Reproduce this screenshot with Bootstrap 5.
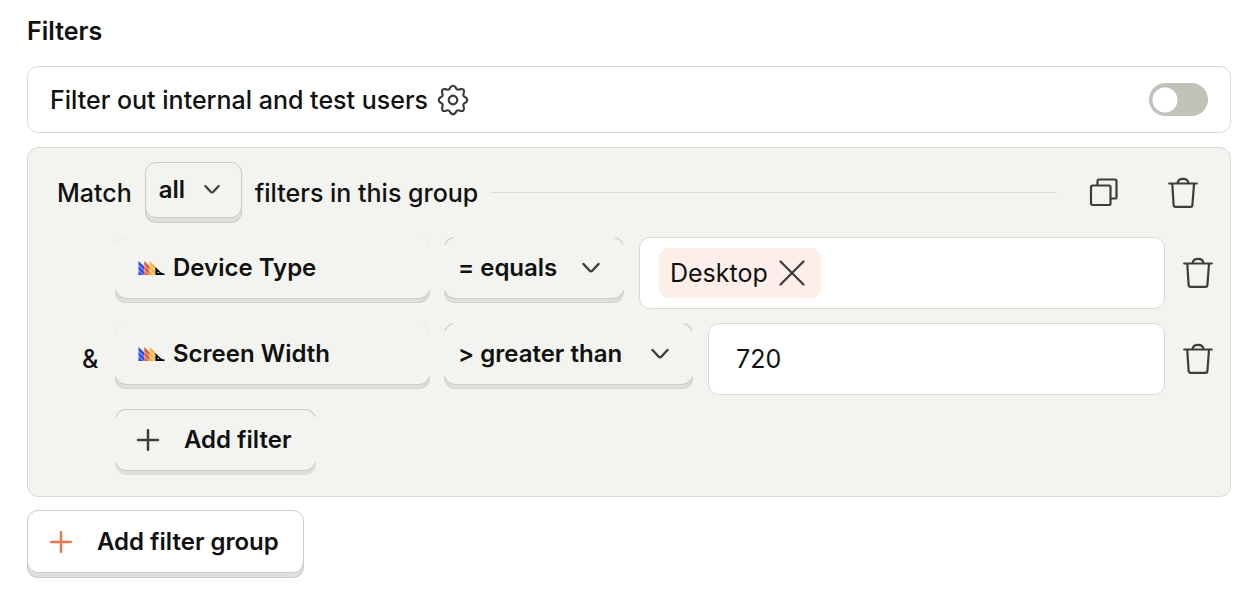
<!DOCTYPE html>
<html lang="en">
<head>
<meta charset="utf-8">
<meta name="viewport" content="width=device-width, initial-scale=1">
<title>Filters</title>
<link href="https://cdn.jsdelivr.net/npm/bootstrap@5.3.0/dist/css/bootstrap.min.css" rel="stylesheet">
<style>
  :root { --ink: #111; --icon: #3c3c3a; --panel: #f3f4ef; --line: #dadbd2; --edge: #cccccb; --lip: #dfdfdc; }
  body { font-family: Inter, "Liberation Sans", sans-serif; font-size: 25px; line-height: 34px; color: var(--ink); background: #fff; }
  .page { padding: 14px 19px 16px 27px; }
  .title { font-size: 25px; line-height: 34px; font-weight: 600; margin-bottom: 18px; }
  .box { border: 1px solid var(--line); border-radius: 11px; }
  .internal { height: 67px; padding: 0 22px; margin-bottom: 14px; }
  .internal label, .group-text { font-weight: 500; }
  .group { background: var(--panel); padding: 14px 17px 21px 29px; margin-bottom: 13px; }
  .group-head { padding-right: 15px; margin-bottom: 14px; gap: 13px; }
  .rule { height: 1px; background: var(--line); }
  .icon-btn { border: 0; background: none; padding: 0; color: var(--icon); line-height: 0; }
  .duplicate { margin: 0 36px 0 19px; }
  svg { display: block; flex: none; }

  .raised { font-size: 24px; line-height: 32px; font-weight: 600; color: var(--ink); border: 1px solid var(--edge); border-radius: 11px;
    height: 63px; margin-bottom: 5px; background-color: #fff; box-shadow: 0 5px 0 -1px var(--lip), 0 5px 0 0 var(--edge); }
  select.raised { appearance: none; padding: 0 13px; }
  .chev { position: relative; }
  .chev svg { position: absolute; right: 24px; top: 25px; color: var(--icon); pointer-events: none; }
  .group-head .chev svg { right: 22px; top: 22px; }
  .match { width: 97px; height: 56px; background-color: var(--panel); }
  /* raised control whose outline only shows around its corners */
  .soft { --top: var(--panel); --corner: var(--edge); border-color: transparent; height: 62px; margin-bottom: 4px;
    box-shadow: 0 4px 0 -1px var(--lip), 0 4px 0 0 var(--under, #d2d2d0);
    background:
      linear-gradient(var(--panel), var(--panel)) padding-box,
      linear-gradient(var(--top), var(--top)) top center / calc(100% - 18px) 1px no-repeat border-box,
      linear-gradient(var(--corner) 8px, var(--panel) 8px, var(--panel) calc(100% - 9px), var(--edge) calc(100% - 8px)) border-box; }
  .soft-faint { --corner: #e9e9e5; }
  .soft-top { --top: var(--edge); --under: var(--lip); }
  .property { width: 315px; padding: 0 22px; gap: 8px; }
  .op-eq { width: 180px; }
  .op-gt { width: 249px; }
  .joiner { width: 44px; padding-left: 25px; font-weight: 500; }
  .cond { gap: 14px; margin-bottom: 14px; }
  .value { min-height: 72px; background: #fff; flex: 1 1 0; min-width: 0; margin-right: 4px; margin-left: 1px; }
  input.value { padding: 0 27px; font-size: 25px; color: var(--ink); }
  .tags { padding: 9px 19px; }
  .tag { background: #fceee9; border-radius: 10px; height: 50px; padding: 0 16px 0 11px; gap: 11px; }
  .add { padding: 0 24px 0 22px; gap: 25px; }
  .add-in { margin-left: 58px; padding-left: 21px; }
  .toggle.form-check-input { width: 59px; height: 33px; margin: 0; border: 0; border-radius: 17px; background-color: #c1c2b9;
    background-image: radial-gradient(circle at 16px 17px, #fff 12px, transparent 13px); background-position: 0 0; background-size: 100% 100%; }
  .toggle.form-check-input:checked { background-color: #f54e00; background-image: radial-gradient(circle at 43px 17px, #fff 12px, transparent 13px); }
</style>
</head>
<body>
<svg width="0" height="0" class="position-absolute" aria-hidden="true">
  <defs>
    <symbol id="trash" viewBox="0 0 30 32">
      <path fill="none" stroke="currentColor" stroke-width="2.200" stroke-linecap="round" stroke-linejoin="round" d="M1.200 6.500H28.800M9.500 6C10 3 12 1.800 15 1.800S20 3 20.500 6M4.300 7L5.600 28Q5.700 29.800 7.500 29.800H22.500Q24.300 29.800 24.400 28L26 7"/>
    </symbol>
    <symbol id="chevron" viewBox="0 0 18 12"><path d="M1.500 2L7.500 8.500Q9 10 10.500 8.500L16.500 2" fill="none" stroke="currentColor" stroke-width="2.400" stroke-linecap="round"/></symbol>
    <symbol id="plus" viewBox="0 0 22 22"><path d="M11 1.200V20.800M1.200 11H20.800" stroke="currentColor" stroke-width="2.500" stroke-linecap="round"/></symbol>
    <symbol id="brand" viewBox="0 0 26 14">
      <path fill="#2a4cf0" d="M0 0L5.500 5.200V9.200L0 4ZM0 4.700L5.500 9.900V13.900L0 8.700ZM0 9.400L4.800 14H0Z"/>
      <path fill="#eb5c2d" d="M5.700 0L11.100 5.200V9.200L5.700 4ZM5.700 4.700L11.100 9.900V13.900L5.700 8.700ZM5.700 9.400L10.500 14H5.700Z"/>
      <path fill="#f3b93f" d="M11.300 0L16.700 5.200V9.200L11.300 4ZM11.300 4.700L16.700 9.900V13.900L11.300 8.700ZM11.300 9.400L16.100 14H11.300Z"/>
      <path fill="#000" d="M16.900 6L22.500 11.500Q24 12.300 26 12.500V14H16.900Z"/>
      <circle cx="19.800" cy="11.500" r=".8" fill="#f3f4ef"/>
    </symbol>
  </defs>
</svg>

<main class="page">
  <h1 class="title">Filters</h1>

  <div class="box internal d-flex align-items-center">
    <label for="internal">Filter out internal and test users</label>
    <button type="button" class="icon-btn ms-2" aria-label="Settings">
      <svg width="34" height="32" viewBox="-17 -16 34 32" fill="none" stroke="currentColor" stroke-width="2.200" stroke-linejoin="round">
        <path d="M12.750-2.540Q15.800 0 12.750 2.540Q9.100 3.780 10.810 7.220Q11.800 11.800 7.220 10.810Q3.780 9.100 2.540 12.750Q0 15.800-2.540 12.750Q-3.780 9.100-7.220 10.810Q-11.800 11.800-10.810 7.220Q-9.100 3.780-12.750 2.540Q-15.800 0-12.750-2.540Q-9.100-3.780-10.810-7.220Q-11.800-11.800-7.220-10.810Q-3.780-9.100-2.540-12.750Q0-15.800 2.540-12.750Q3.780-9.100 7.220-10.810Q11.800-11.800 10.810-7.220Q9.100-3.780 12.750-2.540Z"/>
        <circle r="4.300"/>
      </svg>
    </button>
    <input class="form-check-input toggle ms-auto" type="checkbox" role="switch" id="internal">
  </div>

  <section class="box group">
    <div class="group-head d-flex align-items-center">
      <label class="group-text" for="match">Match</label>
      <span class="chev">
        <select id="match" class="raised match d-block"><option>all</option><option>any</option></select>
        <svg width="16" height="11"><use href="#chevron"/></svg>
      </span>
      <span class="group-text">filters in this group</span>
      <span class="rule flex-grow-1"></span>
      <button type="button" class="icon-btn duplicate" aria-label="Duplicate group">
        <svg width="30" height="30" viewBox="0 0 30 30" fill="none" stroke="currentColor" stroke-width="2.200"><rect x="2" y="7.500" width="19.500" height="19.500" rx="1.500"/><path d="M8.500 7V3Q8.500 1.500 10 1.500H26Q27.500 1.500 27.500 3V19Q27.500 20.500 26 20.500H22"/></svg>
      </button>
      <button type="button" class="icon-btn" aria-label="Delete group"><svg width="30" height="32"><use href="#trash"/></svg></button>
    </div>

    <div class="cond d-flex align-items-center">
      <span class="joiner"></span>
      <button type="button" class="raised soft soft-faint property d-flex align-items-center align-self-start"><svg width="27" height="14"><use href="#brand"/></svg>Device Type</button>
      <span class="chev align-self-start"><select class="raised soft d-block op-eq" aria-label="Device Type operator"><option>= equals</option></select><svg width="18" height="12"><use href="#chevron"/></svg></span>
      <div class="box value tags d-flex align-items-center">
        <span class="tag d-flex align-items-center">Desktop
          <button type="button" class="icon-btn" aria-label="Remove Desktop"><svg width="26" height="26" viewBox="0 0 26 26" stroke="currentColor" stroke-width="2.200" stroke-linecap="round"><path d="M1.500 1.500L24.500 24.500M24.500 1.500L1.500 24.500"/></svg></button>
        </span>
      </div>
      <button type="button" class="icon-btn" aria-label="Delete Device Type filter"><svg width="30" height="32"><use href="#trash"/></svg></button>
    </div>

    <div class="cond d-flex align-items-center">
      <span class="joiner">&amp;</span>
      <button type="button" class="raised soft soft-faint property d-flex align-items-center align-self-start"><svg width="27" height="14"><use href="#brand"/></svg>Screen Width</button>
      <span class="chev align-self-start"><select class="raised soft d-block op-gt" aria-label="Screen Width operator"><option>&gt; greater than</option></select><svg width="18" height="12"><use href="#chevron"/></svg></span>
      <input class="box value" type="text" value="720" aria-label="Screen Width value">
      <button type="button" class="icon-btn" aria-label="Delete Screen Width filter"><svg width="30" height="32"><use href="#trash"/></svg></button>
    </div>

    <button type="button" class="raised soft soft-top add add-in d-flex align-items-center"><svg width="22" height="22" color="#3c3c3a"><use href="#plus"/></svg>Add filter</button>
  </section>

  <button type="button" class="raised add d-flex align-items-center"><svg width="22" height="22" color="#e9784f"><use href="#plus"/></svg>Add filter group</button>
</main>
<script src="https://cdn.jsdelivr.net/npm/bootstrap@5.3.0/dist/js/bootstrap.bundle.min.js"></script>
</body>
</html>
